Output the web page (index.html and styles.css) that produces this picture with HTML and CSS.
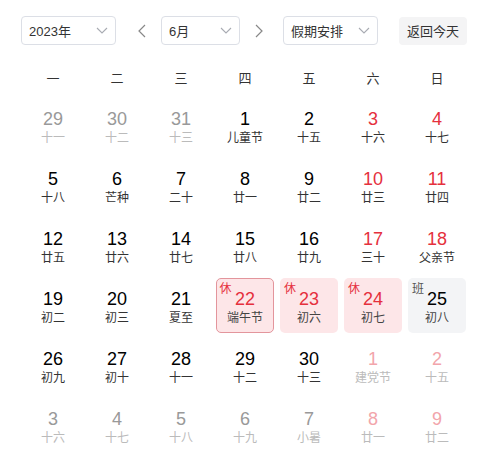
FILE: index.html
```html
<!DOCTYPE html>
<html lang="zh">
<head>
<meta charset="utf-8">
<link rel="stylesheet" href="styles.css">
</head>
<body>
<div class="cal">
  <div class="toolbar">
    <div class="select sel-year"><span>2023年</span><svg class="chev" viewBox="0 0 12 7"><path d="M1 1l5 5 5-5"/></svg></div>
    <div class="arrow prev"><svg viewBox="0 0 8 14"><path d="M7 1L1 7l6 6"/></svg></div>
    <div class="select sel-month"><span>6月</span><svg class="chev" viewBox="0 0 12 7"><path d="M1 1l5 5 5-5"/></svg></div>
    <div class="arrow next"><svg viewBox="0 0 8 14"><path d="M1 1l6 6-6 6"/></svg></div>
    <div class="select sel-hol"><span>假期安排</span><svg class="chev" viewBox="0 0 12 7"><path d="M1 1l5 5 5-5"/></svg></div>
    <div class="today">返回今天</div>
  </div>
  <div class="weekdays">
    <div>一</div><div>二</div><div>三</div><div>四</div><div>五</div><div>六</div><div>日</div>
  </div>
  <div class="grid">
    <div class="cell other"><div class="box"><div class="num">29</div><div class="lun">十一</div></div></div>
    <div class="cell other"><div class="box"><div class="num">30</div><div class="lun">十二</div></div></div>
    <div class="cell other"><div class="box"><div class="num">31</div><div class="lun">十三</div></div></div>
    <div class="cell"><div class="box"><div class="num">1</div><div class="lun">儿童节</div></div></div>
    <div class="cell"><div class="box"><div class="num">2</div><div class="lun">十五</div></div></div>
    <div class="cell wk"><div class="box"><div class="num">3</div><div class="lun">十六</div></div></div>
    <div class="cell wk"><div class="box"><div class="num">4</div><div class="lun">十七</div></div></div>

    <div class="cell"><div class="box"><div class="num">5</div><div class="lun">十八</div></div></div>
    <div class="cell"><div class="box"><div class="num">6</div><div class="lun">芒种</div></div></div>
    <div class="cell"><div class="box"><div class="num">7</div><div class="lun">二十</div></div></div>
    <div class="cell"><div class="box"><div class="num">8</div><div class="lun">廿一</div></div></div>
    <div class="cell"><div class="box"><div class="num">9</div><div class="lun">廿二</div></div></div>
    <div class="cell wk"><div class="box"><div class="num">10</div><div class="lun">廿三</div></div></div>
    <div class="cell wk"><div class="box"><div class="num">11</div><div class="lun">廿四</div></div></div>

    <div class="cell"><div class="box"><div class="num">12</div><div class="lun">廿五</div></div></div>
    <div class="cell"><div class="box"><div class="num">13</div><div class="lun">廿六</div></div></div>
    <div class="cell"><div class="box"><div class="num">14</div><div class="lun">廿七</div></div></div>
    <div class="cell"><div class="box"><div class="num">15</div><div class="lun">廿八</div></div></div>
    <div class="cell"><div class="box"><div class="num">16</div><div class="lun">廿九</div></div></div>
    <div class="cell wk"><div class="box"><div class="num">17</div><div class="lun">三十</div></div></div>
    <div class="cell wk"><div class="box"><div class="num">18</div><div class="lun">父亲节</div></div></div>

    <div class="cell"><div class="box"><div class="num">19</div><div class="lun">初二</div></div></div>
    <div class="cell"><div class="box"><div class="num">20</div><div class="lun">初三</div></div></div>
    <div class="cell"><div class="box"><div class="num">21</div><div class="lun">夏至</div></div></div>
    <div class="cell rest selected"><div class="box"><span class="tag">休</span><div class="num">22</div><div class="lun">端午节</div></div></div>
    <div class="cell rest"><div class="box"><span class="tag">休</span><div class="num">23</div><div class="lun">初六</div></div></div>
    <div class="cell rest"><div class="box"><span class="tag">休</span><div class="num">24</div><div class="lun">初七</div></div></div>
    <div class="cell work"><div class="box"><span class="tag">班</span><div class="num">25</div><div class="lun">初八</div></div></div>

    <div class="cell"><div class="box"><div class="num">26</div><div class="lun">初九</div></div></div>
    <div class="cell"><div class="box"><div class="num">27</div><div class="lun">初十</div></div></div>
    <div class="cell"><div class="box"><div class="num">28</div><div class="lun">十一</div></div></div>
    <div class="cell"><div class="box"><div class="num">29</div><div class="lun">十二</div></div></div>
    <div class="cell"><div class="box"><div class="num">30</div><div class="lun">十三</div></div></div>
    <div class="cell other wk"><div class="box"><div class="num">1</div><div class="lun">建党节</div></div></div>
    <div class="cell other wk"><div class="box"><div class="num">2</div><div class="lun">十五</div></div></div>

    <div class="cell other"><div class="box"><div class="num">3</div><div class="lun">十六</div></div></div>
    <div class="cell other"><div class="box"><div class="num">4</div><div class="lun">十七</div></div></div>
    <div class="cell other"><div class="box"><div class="num">5</div><div class="lun">十八</div></div></div>
    <div class="cell other"><div class="box"><div class="num">6</div><div class="lun">十九</div></div></div>
    <div class="cell other"><div class="box"><div class="num">7</div><div class="lun">小暑</div></div></div>
    <div class="cell other wk"><div class="box"><div class="num">8</div><div class="lun">廿一</div></div></div>
    <div class="cell other wk"><div class="box"><div class="num">9</div><div class="lun">廿二</div></div></div>
  </div>
</div>
</body>
</html>
```
FILE: styles.css
```css
* { box-sizing: border-box; }
html, body { margin: 0; padding: 0; background: #fff; }
body {
  font-family: "Liberation Sans", "Noto Sans CJK SC", sans-serif;
  color: #333;
}
.cal { padding: 16px 18px 0 21px; width: 487px; }

.toolbar { display: flex; align-items: center; height: 29px; }
.select {
  height: 29px;
  border: 1px solid #dcdfe6;
  border-radius: 4px;
  display: flex;
  align-items: center;
  justify-content: space-between;
  padding: 0 7px 0 7px;
  font-size: 13px;
  color: #333;
}
.sel-year { width: 95px; }
.sel-month { width: 79px; }
.sel-hol { width: 95px; }
.chev { width: 12px; height: 7px; fill: none; stroke: #a8abb2; stroke-width: 1.1; }
.arrow { width: 14px; height: 29px; display: flex; align-items: center; justify-content: center; }
.arrow svg { width: 8px; height: 14px; fill: none; stroke: #888; stroke-width: 1.2; }
.prev { margin: 0 12px 0 19px; }
.next { margin: 0 17px 0 12px; }
.today {
  margin-left: 21px;
  width: 68px;
  height: 28px;
  background: #f4f4f5;
  border-radius: 4px;
  font-size: 13px;
  color: #333;
  display: flex;
  align-items: center;
  justify-content: center;
}

.weekdays {
  margin-top: 16px;
  display: grid;
  grid-template-columns: repeat(7, 64px);
  height: 32px;
  align-items: center;
  font-size: 13px;
  color: #333;
  text-align: center;
}

.grid {
  margin-top: 2px;
  display: grid;
  grid-template-columns: repeat(7, 64px);
  grid-auto-rows: 60px;
}
.cell { padding: 3px 3px 2px 3px; }
.box {
  position: relative;
  height: 55px;
  border-radius: 5px;
  padding-top: 11px;
  text-align: center;
}
.num { font-size: 18px; line-height: 20px; color: #000; }
.lun { font-size: 12px; line-height: 18px; color: #333; }

.wk .num { color: #e5303d; }
.other .num { color: #999; }
.other .lun { color: #bbb; }
.other.wk .num { color: #f2a5ab; }

.rest .box { background: #fde6e8; }
.rest .num { color: #e5303d; }
.rest .lun { color: #444; }
.selected .box { border: 1.5px solid #e3959c; padding-top: 9.5px; }
.selected .tag { top: 3.5px; left: 2.5px; }
.work .box { background: #f3f4f6; }
.work .lun { color: #444; }
.tag {
  position: absolute;
  top: 5px;
  left: 4px;
  font-size: 12px;
  line-height: 12px;
  color: #e5303d;
}
.work .tag { color: #555; }
```
